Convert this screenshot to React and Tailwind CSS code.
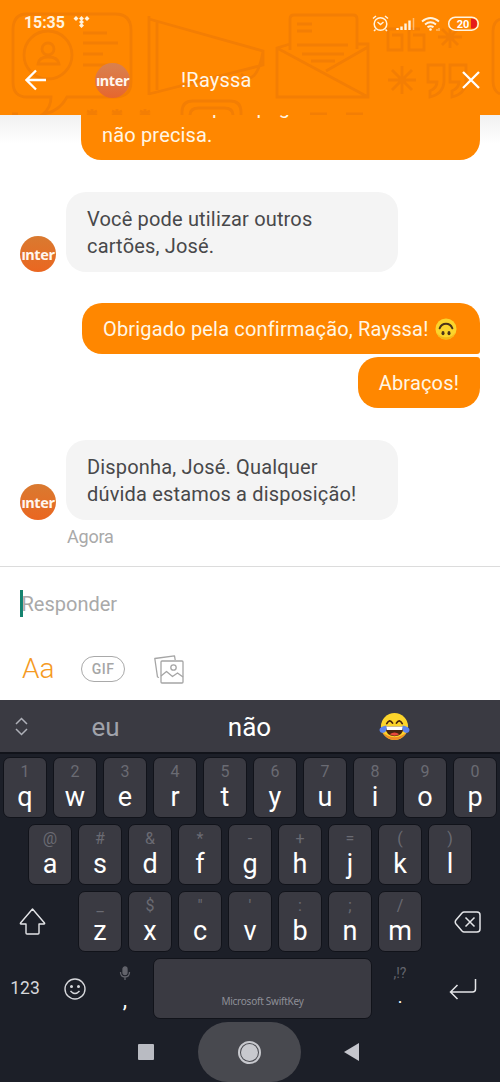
import React from 'react';

const ROW_1 = [['1', 'q'], ['2', 'w'], ['3', 'e'], ['4', 'r'], ['5', 't'], ['6', 'y'], ['7', 'u'], ['8', 'i'], ['9', 'o'], ['0', 'p']];
const ROW_2 = [['@', 'a'], ['#', 's'], ['&', 'd'], ['*', 'f'], ['-', 'g'], ['+', 'h'], ['=', 'j'], ['(', 'k'], [')', 'l']];
const ROW_3 = [['_', 'z'], ['$', 'x'], ['"', 'c'], ["'", 'v'], [':', 'b'], [';', 'n'], ['/', 'm']];

function HeaderPattern() {
  return (
    <svg className="absolute inset-0" width="500" height="115" viewBox="0 0 500 115" fill="none" stroke="#f37e04" strokeWidth="2.800">
      {/* Speech bubble with contact */}
      <path d="M27 14H115Q131 14 131 30V82Q131 97 115 97H67Q59 112 43 114Q51 108 51 97H27Q13 97 13 82V30Q13 14 27 14Z" />
      <circle cx="48" cy="55" r="24" />
      <circle cx="48" cy="49" r="6" />
      <path d="M38 64Q39 57 48 57Q58 57 59 64Z" />
      <path d="M83 33H107M83 43H118M83 54H103M83 65H118" />
      {/* Megaphone */}
      <path d="M149 16V95M157 22V90M149 19L263 51V65L149 94M241 74Q256 88 263 52" />
      <path d="M182 115V112Q182 101 193 101H230Q241 101 241 112V115M190 115Q190 108 199 108H224Q233 108 233 115" />
      {/* Envelope */}
      <path d="M290 50V19Q290 15 294 15H353Q357 15 357 19V49M290 44L277 48V97H368V44H357M277 48L368 97M368 47L326 71M297 24H312M297 31H312M297 45H348M302 54H344M311 61H335" />
      {/* Quotes and asterisks */}
      <path d="M397 29H388V50H402V35H392M420 29H409V50H424V35H413" />
      <path d="M428 65H444V82Q443 94 430 97V91Q437 88 437 82H428ZM450 65H466V82Q465 94 452 97V91Q459 88 459 82H450Z" />
      <path d="M402 66V94M388 80H416M392 70L412 90M412 70L392 90M450 26V48M438 37H462M442 29L458 45M458 29L442 45" />
      <path d="M500 19Q493 22 493 31V81Q493 91 500 94" />
      <path d="M92 109V115M87 111L97 115M97 111L87 115M117 109V115M112 111L122 115M122 111L112 115M145 109V115M140 111L150 115M150 111L140 115M310 114H327M346 114H363M12 114H18" />
    </svg>
  );
}

function StatusIcons() {
  return (
    <svg width="110" height="20" viewBox="0 0 110 20" fill="none" stroke="#fff3df" strokeWidth="1.500">
      <circle cx="10.500" cy="11" r="6.300" />
      <path d="M7.500 9L10.500 11.500L13.500 9M3 5.500L6 3M18 5.500L15 3M5.500 16.500L4 18M15.500 16.500L17 18" />
      <path d="M27.500 15V17M31.500 13.500V17M35.500 10.500V17M39.500 7.500V17" strokeWidth="2.400" />
      <path d="M43.500 5V17" strokeWidth="1.500" opacity=".5" />
      <path d="M52 8.500Q60.500 1.500 69 8.500M55 11.500Q60.500 7 66 11.500M57.500 14.300Q60.500 12 63.500 14.300" strokeWidth="1.900" />
      <circle cx="60.500" cy="16.500" r="1.300" fill="#fff3df" stroke="none" />
      <path d="M67 16V18M69 15V18" strokeWidth="1" opacity=".7" />
      <rect x="78.700" y="4.200" width="29.500" height="13" rx="6.500" />
      <path d="M101 5.800H102.500Q107 6 107 10.700Q107 15.400 102.500 15.600H101Z" fill="#e51c1c" stroke="none" />
      <text x="93" y="14.600" textAnchor="middle" fill="#fff" stroke="none" className="font-[Roboto] text-[11px] font-bold">20</text>
    </svg>
  );
}

function Avatar({ header }) {
  return (
    <div className={header
      ? 'flex size-[35px] shrink-0 items-center justify-center rounded-full bg-linear-to-b from-[#d8814f] to-[#e6662d]'
      : 'flex size-9 shrink-0 items-center justify-center rounded-full bg-linear-to-b from-[#d97a30] to-[#ea6620]'}
    >
      <span className="font-['Noto_Sans'] text-[14.500px] leading-none font-bold tracking-[-0.4px] text-[#fff6ee]">ınter</span>
    </div>
  );
}

function Face({ size, children }) {
  return (
    <svg width={size} height={size} viewBox="0 0 32 32">
      <circle cx="16" cy="16" r="14" fill="#fcd52c" />
      {children}
    </svg>
  );
}

function UpsideDown() {
  return (
    <Face size={24}>
      <path d="M3 20Q7 30 16 30T29 20Q25 27 16 27T3 20Z" fill="#f5b818" />
      <path d="M7.500 15Q10 9 16 9T24.500 15" fill="none" stroke="#4b3419" strokeWidth="2.600" strokeLinecap="round" />
      <ellipse cx="12" cy="21.500" rx="2" ry="2.800" fill="#4b3419" />
      <ellipse cx="20" cy="21.500" rx="2" ry="2.800" fill="#4b3419" />
    </Face>
  );
}

function Joy() {
  return (
    <Face size={31}>
      <path d="M3 21Q8 30 16 30T29 21Q24 27 16 27T3 21Z" fill="#f08a24" />
      <path d="M6.500 16H25.500Q25 26 16 26T6.500 16Z" fill="#47240f" />
      <path d="M7 16H25L24 19.500H8Z" fill="#fff" />
      <path d="M11 24Q16 20.500 21 24Q16 27 11 24Z" fill="#e8483b" />
      <path d="M8 13Q11 7.500 14 12.500M18 12.500Q21 7.500 24 13" fill="none" stroke="#47240f" strokeWidth="1.800" strokeLinecap="round" />
      <path d="M7.500 15Q9 21 5 22.500Q1 23 .5 19.500Q.5 16.500 7.500 15ZM24.500 15Q23 21 27 22.500Q31 23 31.500 19.500Q31.500 16.500 24.500 15Z" fill="#5b83ee" />
    </Face>
  );
}

function Key({ hint, letter }) {
  return (
    <div className="flex h-[61px] w-11 flex-col items-center rounded-[7px] border border-[#11131a] bg-[#3a3a42]">
      <span className="mt-1.5 h-4 text-[16px] leading-4 text-[#6a6b73]">{hint}</span>
      <span className="mt-px text-[27px] leading-8 text-white">{letter}</span>
    </div>
  );
}

function KeyRow({ keys }) {
  return (
    <div className="flex gap-1.5">
      {keys.map(([hint, letter]) => <Key key={letter} hint={hint} letter={letter} />)}
    </div>
  );
}

function Header() {
  return (
    <header className="relative h-[115px] bg-[#ff8700]">
      <HeaderPattern />
      <div className="relative flex h-[45px] items-center pl-6">
        <span className="text-[16px] font-bold tracking-[-0.1px] text-[#fff3df]">15:35</span>
        <svg className="mt-[-2px] ml-2" width="17" height="12" viewBox="0 0 17 12" fill="#fff3df">
          <path d="M3 0L5.500 2.500L3 5L.5 2.500ZM8.500 0L11 2.500L8.500 5L6 2.500ZM14 0L16.500 2.500L14 5L11.500 2.500ZM8.500 3.500L11 6L8.500 8.500L6 6ZM8.500 7L11 9.500L8.500 12L6 9.500Z" />
        </svg>
        <div className="ml-[280px]"><StatusIcons /></div>
      </div>
      <div className="relative flex h-[70px] items-center pl-[25px]">
        <svg width="22" height="22" viewBox="0 0 22 22" fill="none" stroke="#fff" strokeWidth="2.300">
          <path d="M21 11H2M11 1.500L1.500 11L11 20.500" />
        </svg>
        <div className="ml-[48px]"><Avatar header /></div>
        <span className="ml-[51px] text-[20px] tracking-[0.2px] text-[#fff6e8]">!Rayssa</span>
        <svg className="ml-auto mr-5" width="18" height="18" viewBox="0 0 18 18" fill="none" stroke="#fff" strokeWidth="2.300">
          <path d="M1 1L17 17M17 1L1 17" />
        </svg>
      </div>
    </header>
  );
}

function Chat() {
  return (
    <main className="flex h-[451px] flex-col overflow-hidden bg-linear-to-b from-[#f1f1f1] to-white to-[28px] text-[20px] leading-[26.500px] tracking-[0.17px]">
      <div className="ml-[81px] flex h-[45px] w-[399px] flex-col justify-end rounded-b-[20px] bg-[#ff8700] px-[21px] pb-3 text-[#fff6e5]">
        <div className="mb-px flex shrink-0 pl-[110px]">
          <span>p</span>
          <span className="ml-[33px]">pag</span>
        </div>
        <p className="shrink-0">não precisa.</p>
      </div>
      <div className="mt-8 flex items-end pl-5">
        <Avatar />
        <p className="ml-2.5 h-20 w-[332px] rounded-[20px] bg-[#f4f4f4] px-[21px] pt-[14px] text-[#48484a]">
          Você pode utilizar outros<br />cartões, José.
        </p>
      </div>
      <div className="mt-[31px] flex flex-col items-end gap-[3px] pr-5 text-[#fff6e5]">
        <div className="flex h-[51px] w-[398px] items-center rounded-[20px] rounded-br-[3px] bg-[#ff8700] pl-[21px]">
          <span className="mr-[5px] whitespace-nowrap pt-px">Obrigado pela confirmação, Rayssa!</span>
          <UpsideDown />
        </div>
        <div className="flex h-[51px] items-center rounded-[20px] rounded-tr-[3px] bg-[#ff8700] px-[21px] pt-px">Abraços!</div>
      </div>
      <div className="mt-8 flex items-end pl-5">
        <Avatar />
        <p className="ml-2.5 h-20 w-[332px] rounded-[20px] bg-[#f4f4f4] px-[21px] pt-[14px] text-[#48484a]">
          Disponha, José. Qualquer<br />dúvida estamos a disposição!
        </p>
      </div>
      <span className="mt-1 ml-[67px] text-[18px] tracking-[-0.2px] text-[#a9a9a9]">Agora</span>
    </main>
  );
}

function Composer() {
  return (
    <section className="h-[134px] border-t border-[#dcdcdc] bg-white">
      <div className="flex h-[73px] items-center pl-5">
        <span className="h-[27px] w-[2.500px] bg-[#14836f]" />
        <span className="ml-[-1px] text-[20px] text-[#a9a9a9]">Responder</span>
      </div>
      <div className="mt-0.5 flex h-[54px] items-center pl-[22px]">
        <span className="w-[32px] text-[28px] leading-8 font-light text-[#f59a23]">Aa</span>
        <span className="ml-[27px] flex h-[26px] w-11 items-center justify-center rounded-full border border-[#a9a9a9] text-[14px] font-medium tracking-[0.5px] text-[#a6a6a6]">GIF</span>
        <svg className="ml-[29px]" width="30" height="29" viewBox="0 0 30 29" fill="none" stroke="#a5a5a5" strokeWidth="1.300" strokeLinejoin="round">
          <path d="M5 22.500L3.500 22L.8 3.500L20.500 .8L21.200 5" />
          <rect x="7" y="6" width="22" height="22" rx="1" />
          <circle cx="19.500" cy="12.500" r="2.700" />
          <path d="M7 21L12.500 16.500L18.500 21.500L23.500 18L29 22" />
        </svg>
      </div>
    </section>
  );
}

function Keyboard() {
  return (
    <section className="h-[382px] bg-[#1c1f28]">
      <div className="grid h-[54px] grid-cols-[44px_123px_165px_125px] items-center border-b-2 border-[#11131a] bg-[#3a3a42] text-[26px]">
        <svg className="ml-[15px]" width="13" height="19" viewBox="0 0 13 19" fill="none" stroke="#aeb0b8" strokeWidth="1.500">
          <path d="M1 7L6.500 1.500L12 7M1 12L6.500 17.500L12 12" />
        </svg>
        <span className="pt-0.5 text-center text-[#a0a2aa]">eu</span>
        <span className="pt-0.5 text-center text-white">não</span>
        <span className="flex justify-center pt-px"><Joy /></span>
      </div>
      <div className="flex flex-col items-center gap-1.5 pt-[3px]">
        <KeyRow keys={ROW_1} />
        <KeyRow keys={ROW_2} />
        <div className="grid w-full grid-cols-[78px_344px_78px] items-center">
          <svg className="ml-[19px]" width="27" height="28" viewBox="0 0 27 28" fill="none" stroke="#e4e5e8" strokeWidth="1.400" strokeLinejoin="round">
            <path d="M13.500 1L25.500 15Q26 16 25 16H20V25Q20 26 19 26H8Q7 26 7 25V16H2Q1 16 1.500 15Z" />
          </svg>
          <KeyRow keys={ROW_3} />
          <svg className="ml-8" width="27" height="22" viewBox="0 0 27 22" fill="none" stroke="#e4e5e8" strokeWidth="1.500" strokeLinejoin="round">
            <path d="M10 1H23Q26 1 26 4V18Q26 21 23 21H10Q9 21 8 20L2 13Q.5 11 2 9L8 2Q9 1 10 1ZM11.500 6.500L20.500 15.500M20.500 6.500L11.500 15.500" />
          </svg>
        </div>
        <div className="grid h-[61px] w-full grid-cols-[50px_50px_53px_219px_56px_72px]">
          <span className="flex items-center justify-center text-[17.500px] text-[#d6d7db]">123</span>
          <span className="flex items-center justify-center">
            <svg width="22" height="22" viewBox="0 0 22 22" fill="none" stroke="#d6d7db" strokeWidth="1.400">
              <circle cx="11" cy="11" r="10" />
              <path d="M6.500 13Q11 18 15.500 13" />
              <circle cx="7.500" cy="8.500" r=".8" fill="#d6d7db" />
              <circle cx="14.500" cy="8.500" r=".8" fill="#d6d7db" />
            </svg>
          </span>
          <span className="flex flex-col items-center pt-2 pr-[3px]">
            <svg width="12" height="14" viewBox="0 0 12 14" fill="none" stroke="#63646c" strokeWidth="1.300">
              <rect x="4" y="1" width="4" height="7.500" rx="2" fill="#63646c" />
              <path d="M1.500 6Q1.500 11 6 11T10.500 6M6 11V14" />
            </svg>
            <span className="pt-1 text-[22px] leading-8 text-white">,</span>
          </span>
          <span className="flex items-end justify-center rounded-[7px] border border-[#11131a] bg-[#3a3a42] pb-2.5 font-['Noto_Sans'] text-[10px] leading-[14px] tracking-[-0.25px] text-[#8e8f97]">Microsoft SwiftKey</span>
          <span className="flex flex-col items-center pt-1.5">
            <span className="h-4 text-[14px] leading-[18px] text-[#63646c]">,!?</span>
            <span className="pt-1 text-[18px] leading-[26px] text-white">.</span>
          </span>
          <span className="flex items-center pl-[21px]">
            <svg width="28" height="22" viewBox="0 0 28 22" fill="none" stroke="#e4e5e8" strokeWidth="1.500">
              <path d="M26.500 1V11Q26.500 14 23.500 14H1.500M8.500 7L1.500 14L8.500 21" />
            </svg>
          </span>
        </div>
      </div>
      <nav className="flex h-[62px] items-center pt-1 pl-[138px]">
        <span className="size-4 rounded-[1px] bg-[#b9bbc2]" />
        <span className="ml-11 flex h-[60px] w-[103px] items-center justify-center rounded-full bg-[#48494f]">
          <span className="flex size-[23px] items-center justify-center rounded-full border-2 border-[#c8c9ce]">
            <span className="size-[17px] rounded-full bg-[#c8c9ce]" />
          </span>
        </span>
        <svg className="ml-[43px]" width="16" height="18" viewBox="0 0 16 18" fill="#c5c6cd"><path d="M15 0V18L0 9Z" /></svg>
      </nav>
    </section>
  );
}

export default function App() {
  return (
    <div className="h-[1082px] w-[500px] overflow-hidden bg-white font-[Roboto,sans-serif]">
      <Header />
      <Chat />
      <Composer />
      <Keyboard />
    </div>
  );
}
